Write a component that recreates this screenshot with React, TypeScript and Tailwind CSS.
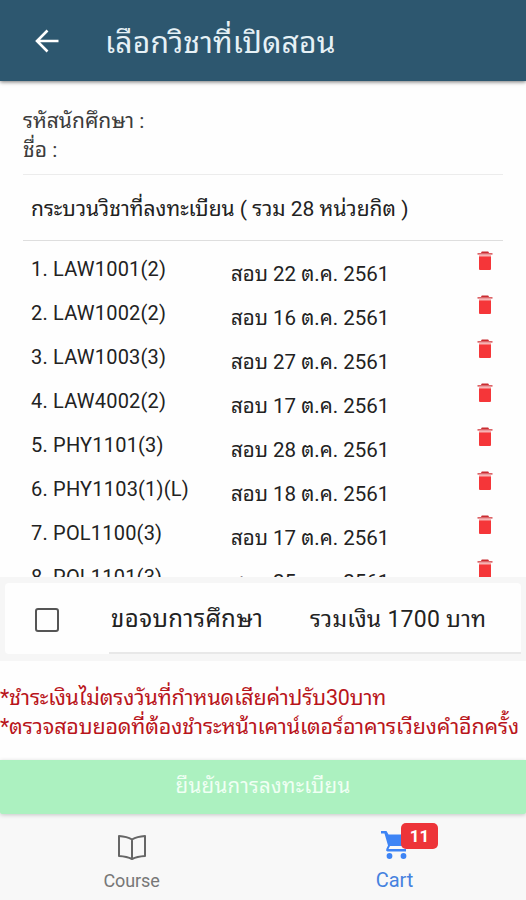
const courses = [
  ['LAW1001(2)', '22'],
  ['LAW1002(2)', '16'],
  ['LAW1003(3)', '27'],
  ['LAW4002(2)', '17'],
  ['PHY1101(3)', '28'],
  ['PHY1103(1)(L)', '18'],
  ['POL1100(3)', '17'],
  ['POL1101(3)', '25'],
];

function Trash() {
  return (
    <svg className="mt-[10px] ml-auto h-[20px] w-[16px] shrink-0" viewBox="0 0 16 20">
      <path d="M4.8 0.6h6.4l1 1.6H3.8z" fill="#c92c31" />
      <path d="M0.5 2h15v1.7h-15z" fill="#dc6468" />
      <path d="M2 3.700h12V6H2z" fill="#f8b4b4" />
      <path d="M2 5.500h12v12.200c0 .8-.5 1.300-1.300 1.300H3.300c-.8 0-1.300-.5-1.300-1.300z" fill="#f53639" />
    </svg>
  );
}

export default function App() {
  return (
    <div lang="th" className="flex h-[900px] w-[526px] flex-col overflow-hidden bg-[#fefefe] font-[Roboto,'Noto_Sans_Thai_Looped',Loma,Garuda,Waree,'Noto_Sans_Thai_UI',Umpush,'Droid_Sans_Thai',sans-serif] text-[20px] leading-[29px] text-[#222] whitespace-nowrap">
      <header className="z-10 flex h-[81px] shrink-0 items-center bg-[#2d576f] text-white shadow-[0_1px_4px_rgba(0,0,0,0.55)]">
        <svg className="ml-[35px] h-6 w-6" viewBox="0 0 24 24" fill="none" stroke="white" strokeWidth="2.6">
          <path d="M23.5 12H2M12.5 1.5L2 12l10.5 10.5" />
        </svg>
        <h1 className="mt-[5px] ml-[46px] text-[30px] leading-[36px] tracking-[0.2px] text-[#e6f1f6]">เลือกวิชาที่เปิดสอน</h1>
      </header>

      <main className="flex h-[496px] shrink-0 flex-col overflow-hidden px-[23px]">
        <div className="h-[94px] shrink-0 border-b border-[#ececec] pt-[26px] text-[21px] text-[#3c3c3c]">
          <p>รหัสนักศึกษา :</p>
          <p>ชื่อ :</p>
        </div>
        <div className="flex h-[66px] shrink-0 items-center border-b border-[#dedede] pt-[3px] pl-[8px] text-[21px]">
          กระบวนวิชาที่ลงทะเบียน ( รวม 28 หน่วยกิต )
        </div>
        <ul>
          {courses.map(([code, day], i) => (
            <li key={code} className="flex h-[44px] pr-[10px] pl-[8px]">
              <span className="w-[200px] pt-[14px] tracking-[0.2px]">{i + 1}. {code}</span>
              <span className="pt-[19px] text-[20.5px]">สอบ {day} ต.ค. 2561</span>
              <Trash />
            </li>
          ))}
        </ul>
      </main>

      <section className="h-[84px] shrink-0 bg-[#f6f6f6] px-[5px] pt-[6px]">
        <div className="flex h-[71px] items-center rounded bg-[#fefefe] pl-[30px] text-[23px]">
          <span className="mt-[2px] h-[24px] w-[24px] rounded-[3px] border-[2.5px] border-[#555]" />
          <div className="ml-[50px] flex h-full flex-1 items-center border-b-2 border-[#e8e8e8] pt-[4px]">
            <span className="w-[201px] pl-[2px] text-[24px] tracking-[0.4px]">ขอจบการศึกษา</span>
            <span className="tracking-[0.25px]">รวมเงิน 1700 บาท</span>
          </div>
        </div>
      </section>

      <section className="h-[99px] shrink-0 pt-[22px] text-[21.5px] tracking-[-0.18px] text-[#b9151b]">
        <p>*ชำระเงินไม่ตรงวันที่กำหนดเสียค่าปรับ30บาท</p>
        <p>*ตรวจสอบยอดที่ต้องชำระหน้าเคาน์เตอร์อาคารเวียงคำอีกครั้ง</p>
      </section>

      <button className="z-10 h-[54px] shrink-0 rounded-b-[2px] bg-[#acf1c0] pb-[2px] text-[20.5px] tracking-[0.3px] text-[#f0fff4] shadow-[0_1px_4px_rgba(0,0,0,0.2)]">
        ยืนยันการลงทะเบียน
      </button>

      <nav className="grid flex-1 grid-cols-2 bg-[#f8f8f8]">
        <div className="flex flex-col items-center pt-[20px] text-[18px] text-[#777]">
          <svg className="h-[27px] w-[30px]" viewBox="0 0 30 27" fill="none" stroke="#666" strokeWidth="2" strokeLinejoin="round">
            <path d="M15 5.5Q10 2.5 2 2v20q8 .5 13 3 5-2.500 13-3V2q-8 .5-13 3.500zM15 5.500V25" />
          </svg>
          <span className="mt-[5px] tracking-[-0.1px]">Course</span>
        </div>
        <div className="relative flex flex-col items-center pt-[16px] text-[20px] text-[#4682df]">
          <svg className="h-[30px] w-[28px]" viewBox="0 0 28 30" fill="#3d84f5">
            <path d="M0 1h5.500l2 3.500H27L22 16H9l-1.500 3H25v2.500H6.500Q4.500 21 5.300 19L7 15.500 3.500 3.500H0z" />
            <circle cx="8.500" cy="26" r="2.900" />
            <circle cx="22.500" cy="26" r="2.900" />
          </svg>
          <span className="mt-[6px]">Cart</span>
          <b className="absolute top-[9px] left-[138px] h-[26px] w-[37px] rounded-[5px] bg-[#ed3439] text-center text-[17px] leading-[26px] text-white">11</b>
        </div>
      </nav>
    </div>
  );
}
